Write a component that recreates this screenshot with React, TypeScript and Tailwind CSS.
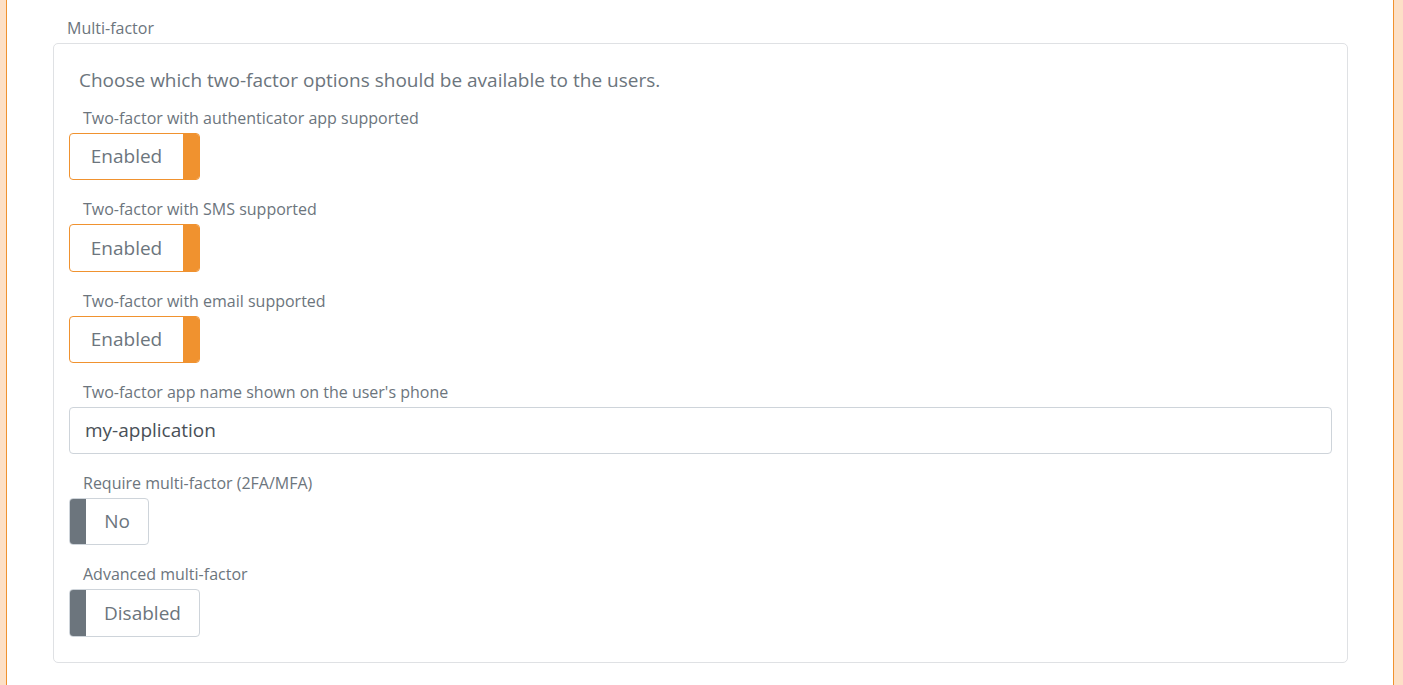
const FONT = "font-['Open_Sans','Noto_Sans',sans-serif]";

function Toggle({ on, label, width }: { on: boolean; label: string; width: string }) {
  if (on) {
    return (
      <div className={`flex h-[47.25px] ${width} rounded-[4px] border border-[#f0922f] bg-white`}>
        <div className="flex flex-1 items-center justify-center text-[19px] text-[#6c757d]">{label}</div>
        <div className="w-[16px] rounded-r-[3px] bg-[#f0922f]" />
      </div>
    );
  }
  return (
    <div className={`flex h-[47.25px] ${width} rounded-[4px] border border-[#ced4da] bg-white`}>
      <div className="w-[16px] rounded-l-[3px] bg-[#6c757d]" />
      <div className="flex flex-1 items-center justify-center text-[19px] text-[#6c757d]">{label}</div>
    </div>
  );
}

function Field({ label, children }: { label: string; children: React.ReactNode }) {
  return (
    <div className="flex flex-col">
      <div className="h-[22px] pl-[14px] text-[16px] leading-[22px] text-[#6c757d]">{label}</div>
      <div className="mt-[4px]">{children}</div>
    </div>
  );
}

export default function App() {
  return (
    <div className={`flex h-[685px] w-full bg-white ${FONT}`}>
      <div className="w-[6px] bg-[#fde0c6]" />
      <div className="w-px bg-[#f0922f]" />

      <div className="flex-1 pl-[46px] pr-[45px] pt-[17px]">
        <div className="pl-[14px] text-[16px] leading-[22px] text-[#6c757d]">Multi-factor</div>

        <div className="mt-[4px] rounded-[5px] border border-[#dfe1e4] px-[15px] pb-[25px] pt-[23px]">
          <div className="h-[26px] pl-[10px] text-[19px] leading-[26px] text-[#6c757d]">
            Choose which two-factor options should be available to the users.
          </div>

          <div className="mt-[14px] flex flex-col gap-[18px]">
            <Field label="Two-factor with authenticator app supported">
              <Toggle on label="Enabled" width="w-[131px]" />
            </Field>
            <Field label="Two-factor with SMS supported">
              <Toggle on label="Enabled" width="w-[131px]" />
            </Field>
            <Field label="Two-factor with email supported">
              <Toggle on label="Enabled" width="w-[131px]" />
            </Field>
            <Field label="Two-factor app name shown on the user's phone">
              <div className="flex h-[47.25px] items-center rounded-[4px] border border-[#ced4da] px-[15px] text-[19px] text-[#495057]">
                my-application
              </div>
            </Field>
            <Field label="Require multi-factor (2FA/MFA)">
              <Toggle on={false} label="No" width="w-[80px]" />
            </Field>
            <Field label="Advanced multi-factor">
              <Toggle on={false} label="Disabled" width="w-[131px]" />
            </Field>
          </div>
        </div>
      </div>

      <div className="w-px bg-[#f0922f]" />
      <div className="w-[9px] bg-[#fde0c6]" />
    </div>
  );
}
